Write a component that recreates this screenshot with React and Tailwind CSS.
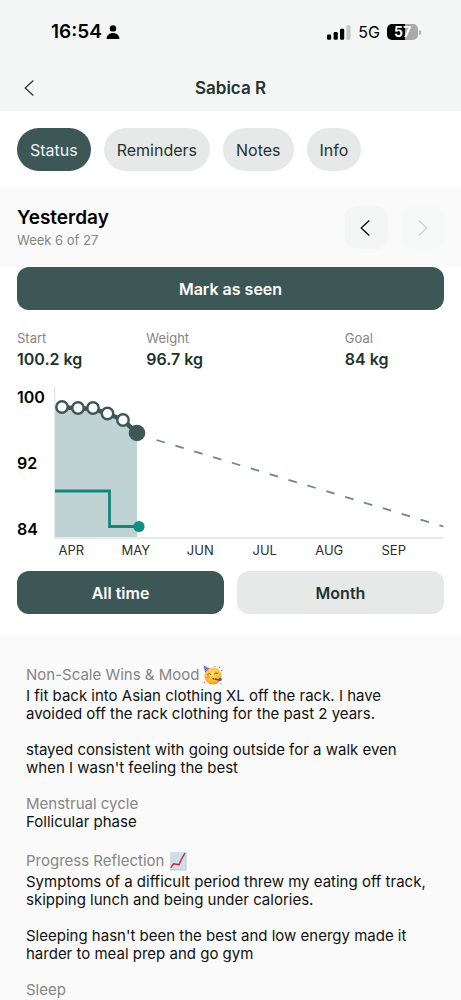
import React from "react";

const tabs = ["Status", "Reminders", "Notes", "Info"];
const months = ["APR", "MAY", "JUN", "JUL", "AUG", "SEP"];
const points = [
  [8, 20],
  [24, 21],
  [39, 21],
  [53.5, 26.5],
  [69, 33],
];

function Chevron({ flip }) {
  return (
    <svg
      viewBox="0 0 10 16"
      className="h-4 w-[10px]"
      fill="none"
      stroke="currentColor"
      strokeWidth="1.2"
      strokeLinecap="round"
      aria-hidden="true"
    >
      <path d={flip ? "M1 0.8 8.8 8 1 15.2" : "M9 0.8 1.2 8 9 15.2"} />
    </svg>
  );
}

function StatusBar() {
  return (
    <div className="flex h-16 items-center justify-between pl-[51px] pr-10 text-black">
      <div className="flex items-center gap-1">
        <span className="text-[19px] font-semibold leading-6">16:54</span>
        <svg viewBox="0 0 14 14" className="size-[14px]" aria-hidden="true">
          <circle cx="7" cy="3.4" r="3.2" />
          <path d="M0.6 14C0.6 10 3.8 8 7 8s6.4 2 6.4 6z" />
        </svg>
      </div>
      <div className="flex items-center gap-[7px]">
        <svg viewBox="0 0 24 15" className="h-[15px] w-6" aria-hidden="true">
          <rect x="0" y="9.5" width="4.2" height="5.2" rx="1.3" />
          <rect x="6.6" y="7" width="4.2" height="7.7" rx="1.3" />
          <rect x="13" y="3.8" width="4.2" height="10.9" rx="1.3" />
          <rect x="19.4" y="0.3" width="4.2" height="14.4" rx="1.3" fill="#c6c8c8" />
        </svg>
        <span className="text-base leading-5">5G</span>
        <div className="flex items-center gap-px">
          <span className="flex h-4 w-[31px] items-center justify-center rounded-[5px] bg-linear-to-r from-black from-57% to-[#a9abab] to-57% text-sm font-bold leading-4 text-white">
            57
          </span>
          <span className="h-[5px] w-[2px] rounded-r-full bg-[#a9abab]" />
        </div>
      </div>
    </div>
  );
}

function Stat({ label, value }) {
  return (
    <div>
      <dt className="text-[13px] leading-5 text-[#858585]">{label}</dt>
      <dd className="text-base font-semibold leading-[22px] text-[#22332f]">{value}</dd>
    </div>
  );
}

function Chart() {
  return (
    <div>
      <div className="flex">
        <div className="flex w-[37px] shrink-0 flex-col justify-between text-base font-semibold leading-5 text-black">
          <span>100</span>
          <span>92</span>
          <span>84</span>
        </div>
        <svg viewBox="0 0 390 152" className="h-auto min-w-0 flex-1" fill="none" role="img" aria-label="Weight over time">
          <path d="M1 20H24L39 21 53.5 26.5 69 33 83 46V150H1z" fill="#bfd2d4" />
          <path d="M0.5 0V151M0 151H389.5" stroke="#dfe6e5" strokeWidth="1.5" />
          <path
            d="M102.5 53 389.5 139.5"
            stroke="#71877f"
            strokeWidth="1.8"
            strokeDasharray="8.7 11"
          />
          <path d="M8 20 24 21.5H39L53.5 26.5 69 33 83 46" stroke="#3d5656" strokeWidth="4.5" />
          {points.map(([x, y]) => (
            <circle key={x} cx={x} cy={y} r="5.7" fill="#fff" stroke="#3d5656" strokeWidth="2.4" />
          ))}
          <circle cx="83" cy="46" r="8.3" fill="#3d5656" />
          <path d="M1 104H55.5V139.5H85" stroke="#13867a" strokeWidth="2.8" />
          <circle cx="85" cy="139.5" r="5.6" fill="#0f907f" />
        </svg>
      </div>
      <div className="grid grid-cols-6 pl-[22px] pr-[18px] text-center text-[13px] leading-[22px] text-[#2b2f2f]">
        {months.map((m) => (
          <span key={m}>{m}</span>
        ))}
      </div>
    </div>
  );
}

function PartyFace() {
  return (
    <svg viewBox="0 0 20 20" className="size-5" role="img" aria-label="Partying face">
      <defs>
        <radialGradient id="face" cx="0.45" cy="0.35" r="0.7">
          <stop offset="0" stopColor="#ffdf5e" />
          <stop offset="0.65" stopColor="#fbbd3a" />
          <stop offset="1" stopColor="#e58f1e" />
        </radialGradient>
      </defs>
      <circle cx="10" cy="11" r="8.6" fill="url(#face)" />
      <path d="M0.6 0.8 6.6 3.2 2.2 7.6z" fill="#7553b8" />
      <path d="M1.6 3.6 4.2 2.4M2 5.8 5.6 3" stroke="#c79be8" strokeWidth="0.8" />
      <path d="M4.6 9.4Q6.2 7.4 7.8 9.2M11.4 8.8Q13 6.8 14.6 8.4" stroke="#6b4212" strokeWidth="0.9" fill="none" strokeLinecap="round" />
      <circle cx="5" cy="12.2" r="1.8" fill="#f5893a" opacity="0.6" />
      <path d="M9 13.4Q10.4 12.6 11.8 13.2L11.2 14.8Q9.8 15 9 13.4z" fill="#a04a1b" />
      <path d="M12 14 17 15.2" stroke="#5d4595" strokeWidth="1.4" />
      <circle cx="17.2" cy="14.4" r="1.6" fill="#6d4d9c" />
      <circle cx="12" cy="1.6" r="0.7" fill="#4a8fd6" />
      <circle cx="16.4" cy="2.4" r="0.7" fill="#d9534f" />
      <circle cx="18.8" cy="5.6" r="0.7" fill="#7553b8" />
      <circle cx="1.4" cy="17.4" r="0.6" fill="#d9534f" />
      <circle cx="18" cy="18.8" r="0.6" fill="#7553b8" />
    </svg>
  );
}

function RisingChart() {
  return (
    <svg viewBox="0 0 20 20" className="size-5" role="img" aria-label="Chart increasing">
      <rect x="2" y="1" width="16" height="18" fill="#d3e0e8" />
      <path d="M2 5.5H18M2 10H18M2 14.5H18M6 1V19M10 1V19M14 1V19" stroke="#c8d7e0" strokeWidth="0.6" />
      <path d="M2 19H18V1" stroke="#b4c2cb" strokeWidth="0.8" fill="none" />
      <path d="M2.8 16.8 5.4 12.8 11 13.8 13.6 8 17 2" stroke="#b82f42" strokeWidth="1.5" fill="none" strokeLinejoin="round" />
    </svg>
  );
}

const notes = [
  {
    title: "Non-Scale Wins & Mood",
    icon: <PartyFace />,
    body: [
      "I fit back into Asian clothing XL off the rack. I have avoided off the rack clothing for the past 2 years.",
      "stayed consistent with going outside for a walk even when I wasn't feeling the best",
    ],
  },
  { title: "Menstrual cycle", body: ["Follicular phase"] },
  {
    title: "Progress Reflection",
    icon: <RisingChart />,
    body: [
      "Symptoms of a difficult period threw my eating off track, skipping lunch and being under calories.",
      "Sleeping hasn't been the best and low energy made it harder to meal prep and go gym",
    ],
  },
  { title: "Sleep", body: [] },
];

export default function App() {
  return (
    <div className="flex min-h-screen flex-col bg-white font-['Inter','Liberation_Sans',sans-serif]">
      <header className="bg-[#f4f6f6]">
        <StatusBar />
        <div className="grid h-[47px] grid-cols-[1fr_auto_1fr] items-center px-[17px]">
          <button type="button" aria-label="Back" className="flex h-8 w-6 items-center justify-center text-[#22332f]">
            <Chevron />
          </button>
          <h1 className="text-[17px] font-semibold leading-6 text-[#22332f]">Sabica R</h1>
        </div>
      </header>

      <nav className="flex gap-[13px] px-[17px] py-[17px]">
        {tabs.map((t, i) => (
          <button
            key={t}
            type="button"
            className={
              i === 0
                ? "h-[43px] rounded-full bg-[#3d5656] px-[13px] text-base text-[#eef4f3]"
                : "h-[43px] rounded-full bg-[#e7e9e8] px-[13px] text-base text-[#22332f]"
            }
          >
            {t}
          </button>
        ))}
      </nav>

      <section className="flex h-[79px] items-center justify-between bg-[#fafafa] px-[17px]">
        <div>
          <h2 className="text-[19px] font-semibold leading-6 text-black">Yesterday</h2>
          <p className="text-[13px] leading-5 text-[#858585]">Week 6 of 27</p>
        </div>
        <div className="flex gap-[13px]">
          <button type="button" aria-label="Previous day" className="flex size-[43px] items-center justify-center rounded-xl bg-[#f4f6f6] pr-1 text-black">
            <Chevron />
          </button>
          <button type="button" aria-label="Next day" disabled className="flex size-[43px] items-center justify-center rounded-xl bg-[#f7f8f8] text-[#cfcfcf]">
            <Chevron flip />
          </button>
        </div>
      </section>

      <section className="px-[17px] pb-[21px]">
        <button type="button" className="h-[43px] w-full rounded-xl bg-[#3d5656] text-base font-semibold text-white">
          Mark as seen
        </button>
        <dl className="grid grid-cols-[129fr_198fr_99fr] pb-[17px] pt-[18px]">
          <Stat label="Start" value="100.2 kg" />
          <Stat label="Weight" value="96.7 kg" />
          <Stat label="Goal" value="84 kg" />
        </dl>
        <Chart />
        <div className="grid grid-cols-2 gap-[13px] pt-[10px]">
          <button type="button" className="h-[43px] rounded-xl bg-[#3d5656] text-base font-semibold text-white">
            All time
          </button>
          <button type="button" className="h-[43px] rounded-xl bg-[#e7e9e8] text-base font-semibold text-[#22332f]">
            Month
          </button>
        </div>
      </section>

      <main className="flex flex-1 flex-col gap-[18px] bg-[#fafafa] px-[26px] pt-7 text-[15px] leading-[18px] text-[#111]">
        {notes.map((n) => (
          <article key={n.title}>
            <h3 className={n.icon ? "flex h-6 items-center gap-1 text-[#858585]" : "text-[#858585]"}>
              {n.title}
              {n.icon}
            </h3>
            <div className="flex flex-col gap-[18px]">
              {n.body.map((p) => (
                <p key={p}>{p}</p>
              ))}
            </div>
          </article>
        ))}
      </main>
    </div>
  );
}
